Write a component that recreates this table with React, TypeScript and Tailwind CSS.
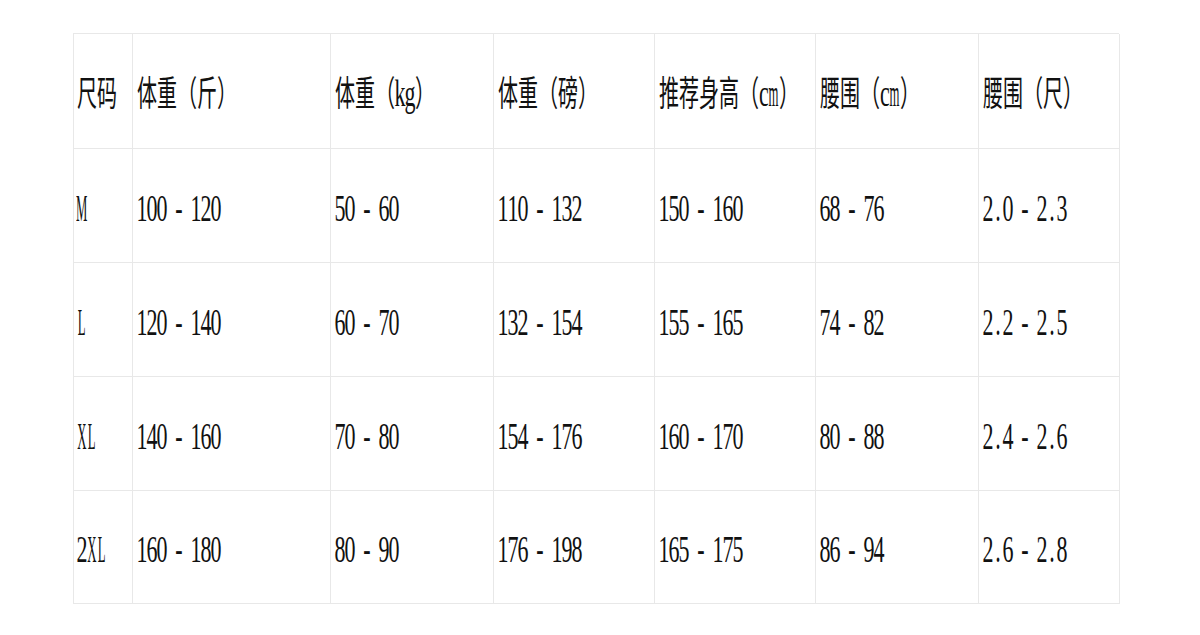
const header = ["尺码", "体重（斤）", "体重（kg）", "体重（磅）", "推荐身高（cm）", "腰围（cm）", "腰围（尺）"]

const rows = [
    ["M", "100 - 120", "50 - 60", "110 - 132", "150 - 160", "68 - 76", "2.0 - 2.3"],
    ["L", "120 - 140", "60 - 70", "132 - 154", "155 - 165", "74 - 82", "2.2 - 2.5"],
    ["XL", "140 - 160", "70 - 80", "154 - 176", "160 - 170", "80 - 88", "2.4 - 2.6"],
    ["2XL", "160 - 180", "80 - 90", "176 - 198", "165 - 175", "86 - 94", "2.6 - 2.8"],
]

// half-width chars sit in narrow boxes, like the monospaced font of the original sheet
const Glyph = ({ ch }: { ch: string }) => {
    if (ch.charCodeAt(0) > 255) return <span>{ch}</span>
    const narrow = /[A-Zmw]/.test(ch)
    return (
        <span
            className={`inline-flex justify-center text-[22px] whitespace-pre ${ch == " " ? "w-[7px]" : "w-[10px]"}`}
        >
            <span className={`inline-block shrink-0 ${narrow ? "scale-x-[0.58]" : ""}`}>{ch}</span>
        </span>
    )
}

const Cell = ({ text, first }: { text: string; first?: boolean }) => (
    <div
        className={`flex items-center pt-[6px] border-r border-b border-[#e8e8e8] whitespace-nowrap
                    ${first ? "pl-[3px]" : "pl-[4px]"}`}
    >
        <span className="inline-block origin-left scale-y-[1.75] text-[#111]">
            {text.split("").map((ch, i) => (
                <Glyph key={i} ch={ch} />
            ))}
        </span>
    </div>
)

const App = () => {
    return (
        <div
            className="w-[1200px] h-[635px] bg-white pt-[33px] pl-[73px]"
            style={{ fontFamily: '"Liberation Serif", "Noto Sans CJK SC", serif' }}
        >
            <div
                className="grid grid-cols-[59px_198px_163px_161px_161px_163px_141px] grid-rows-[115px_114px_114px_114px_113px]
                           w-[1046px] border-l border-t border-[#e8e8e8] text-[20px] leading-none"
            >
                {header.map((h, i) => (
                    <Cell key={h} text={h} first={i == 0} />
                ))}
                {rows.map((r) =>
                    r.map((c, i) => <Cell key={r[0] + i} text={c} first={i == 0} />)
                )}
            </div>
        </div>
    )
}

export default App
